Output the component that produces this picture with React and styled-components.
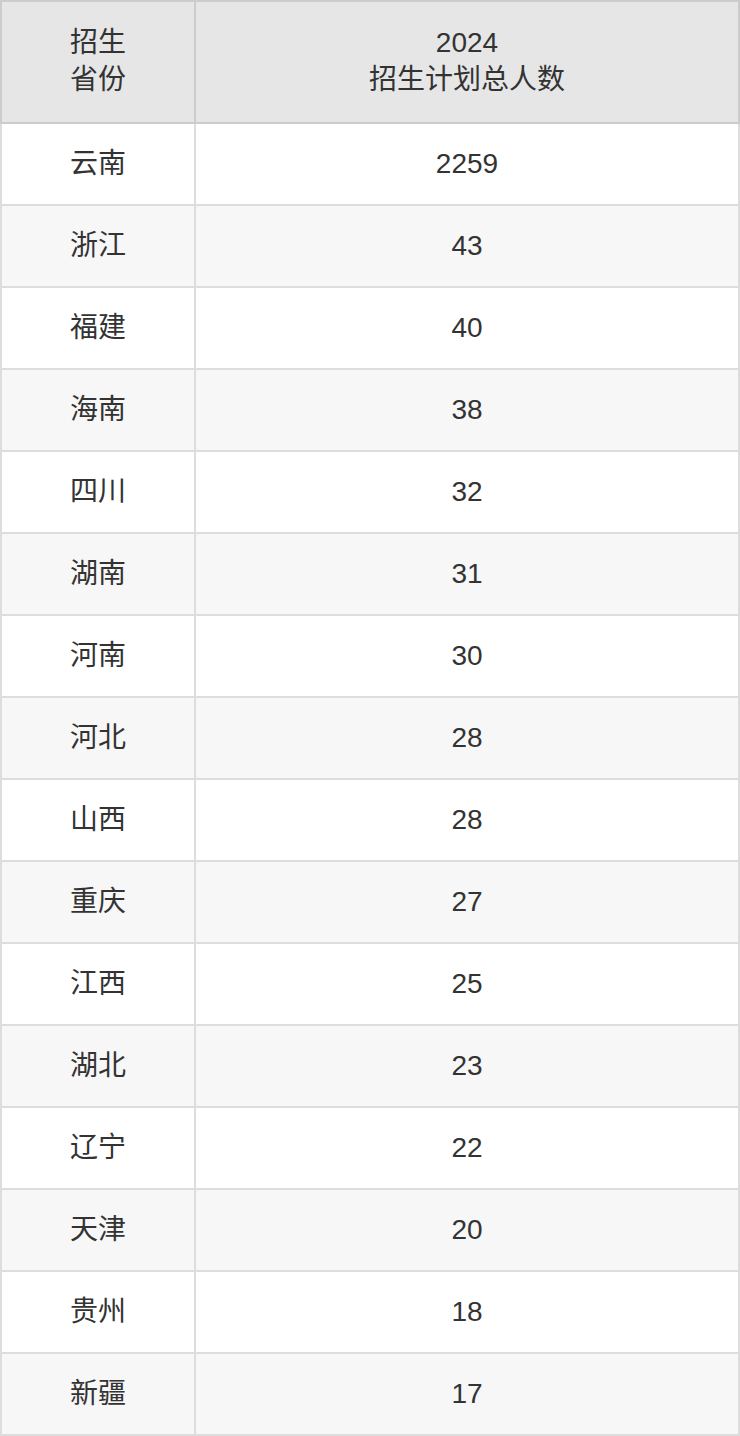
import React from "react";
import styled, { createGlobalStyle } from "styled-components";

const Global = createGlobalStyle`
  html, body { margin: 0; padding: 0; background: #fff; }
  body { font-family: "Liberation Sans", "Noto Sans CJK SC", sans-serif; }
`;

const Table = styled.table`
  width: 740px;
  border-collapse: collapse;
  table-layout: fixed;
  font-family: "Liberation Sans", "Noto Sans CJK SC", sans-serif;
  font-size: 28px;
  color: #333;
`;

const HeadCell = styled.th`
  font-weight: normal;
  background: #e6e6e6;
  border: 2px solid #cccccc;
  padding: 23px 8px 24px;
  line-height: 36.5px;
  text-align: center;
  vertical-align: middle;
`;

const Row = styled.tr`
  background: ${(p) => (p.$alt ? "#f7f7f7" : "#ffffff")};
`;

const Cell = styled.td`
  border: 2px solid #dddddd;
  height: 80px;
  padding: 0 8px;
  text-align: center;
  vertical-align: middle;
  line-height: 36px;
`;

const data = [
  ["云南", "2259"],
  ["浙江", "43"],
  ["福建", "40"],
  ["海南", "38"],
  ["四川", "32"],
  ["湖南", "31"],
  ["河南", "30"],
  ["河北", "28"],
  ["山西", "28"],
  ["重庆", "27"],
  ["江西", "25"],
  ["湖北", "23"],
  ["辽宁", "22"],
  ["天津", "20"],
  ["贵州", "18"],
  ["新疆", "17"],
];

export default function App() {
  return (
    <>
      <Global />
      <Table>
        <colgroup>
          <col style={{ width: 194 }} />
          <col />
        </colgroup>
        <thead>
          <tr>
            <HeadCell>
              招生
              <br />
              省份
            </HeadCell>
            <HeadCell>
              2024
              <br />
              招生计划总人数
            </HeadCell>
          </tr>
        </thead>
        <tbody>
          {data.map(([p, n], i) => (
            <Row key={p} $alt={i % 2 === 1}>
              <Cell>{p}</Cell>
              <Cell>{n}</Cell>
            </Row>
          ))}
        </tbody>
      </Table>
    </>
  );
}
